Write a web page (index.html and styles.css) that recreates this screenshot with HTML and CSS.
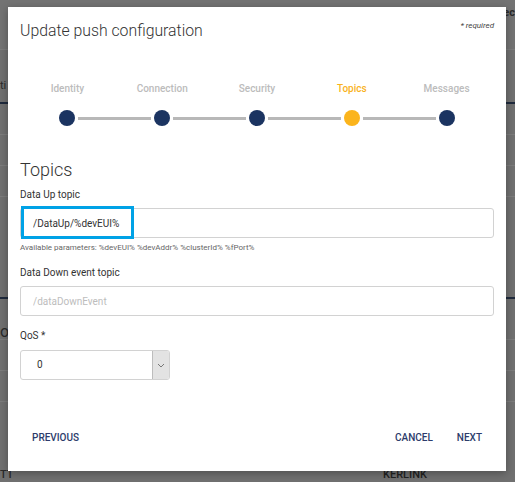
FILE: index.html
```
<!doctype html>
<html>
<head>
    <title>Update push configuration</title>
<link rel="stylesheet" href="styles.css">
</head>
<body>
    <div class="page">
        <div class="band band-top"><span class="peek-right">ec</span></div>
        <div class="band band-tabs"><span class="peek-left">ti</span></div>
        <div class="band band-row"></div>
        <div class="band band-row"></div>
        <div class="band band-row"></div>
        <div class="band band-dark"></div>
        <div class="band band-title"><span class="peek-left big">or</span></div>
        <div class="band band-row"></div>
        <div class="band band-row"></div>
        <div class="band band-last"><span class="peek-left">TT</span><span class="peek-kerlink">KERLINK</span></div>
    </div>

    <div class="modal">
        <div class="modal-header">
            <h1 class="modal-title">Update push configuration</h1>
            <span class="required">* required</span>
        </div>

        <div class="stepper">
            <div class="step done"><span class="step-label">Identity</span><span class="step-dot"></span></div>
            <div class="step done"><span class="step-label">Connection</span><span class="step-dot"></span></div>
            <div class="step done"><span class="step-label">Security</span><span class="step-dot"></span></div>
            <div class="step active"><span class="step-label">Topics</span><span class="step-dot"></span></div>
            <div class="step done"><span class="step-label">Messages</span><span class="step-dot"></span></div>
        </div>

        <h2 class="section-title">Topics</h2>

        <label class="field-label">Data Up topic</label>
        <div class="field">
            <input class="text-input" type="text" value="/DataUp/%devEUI%">
            <span class="highlight"></span>
        </div>
        <p class="help">Available parameters: %devEUI% %devAddr% %clusterId% %fPort%</p>

        <label class="field-label">Data Down event topic</label>
        <div class="field">
            <input class="text-input" type="text" placeholder="/dataDownEvent">
        </div>

        <label class="field-label">QoS *</label>
        <div class="select">
            <span class="select-value">0</span>
            <span class="select-arrow">
                <svg width="8" height="5" viewBox="0 0 8 5"><path d="M1 1 L4 4 L7 1" fill="none" stroke="#777" stroke-width="1"/></svg>
            </span>
        </div>

        <div class="modal-footer">
            <button class="btn">PREVIOUS</button>
            <div class="footer-right">
                <button class="btn">CANCEL</button>
                <button class="btn">NEXT</button>
            </div>
        </div>
    </div>
</body>
</html>
```
FILE: styles.css
```
body {
    margin: 0;
    background-color: #707070;
    font-family: Roboto, "Liberation Sans", sans-serif;
    color: #333;
    overflow: hidden;
}
.page {
    height: 482px;
    display: flex;
    flex-direction: column;
}
.band {
    border-bottom: 1px solid #7c7c7c;
    position: relative;
    flex: none;
}
.band-top { height: 49px; background-color: #737373; }
.band-tabs { height: 52px; border-bottom: 2px solid #1f2a3d; }
.band-row { height: 30px; }
.band-dark { height: 100px; border-bottom: 2px solid #1f2a3d; }
.band-title { height: 40px; }
.band-last { flex: 1; border-bottom: none; }
.peek-left {
    position: absolute;
    left: 0;
    top: 29px;
    font-size: 11px;
    color: #2a2a2a;
}
.peek-left.big { font-size: 16px; top: 23px; }
.band-last .peek-left { top: auto; bottom: 1px; font-weight: 500; }
.peek-right {
    position: absolute;
    right: 0;
    top: 6px;
    font-size: 11px;
    font-weight: bold;
    color: #2a2a2a;
}
.peek-kerlink {
    position: absolute;
    left: 383px;
    bottom: 1px;
    font-size: 11px;
    font-weight: 500;
    color: #222;
}

/* dialog sits over the page */
.modal {
    position: absolute;
    left: 8px;
    top: 7px;
    width: 474px;
    height: 464px;
    padding: 0 12px;
    background-color: #fff;
    box-shadow: 0 2px 8px rgba(0, 0, 0, 0.3);
}
.modal-header {
    display: flex;
    justify-content: space-between;
    align-items: flex-start;
    padding-top: 14px;
}
.modal-title {
    margin: 0;
    font-size: 15.8px;
    line-height: 20px;
    font-weight: 300;
    color: #333;
}
.required {
    font-size: 8px;
    font-style: italic;
    color: #444;
    margin-top: 0;
}

.stepper {
    display: grid;
    grid-template-columns: repeat(5, 1fr);
    margin-top: 42px;
}
.step {
    display: flex;
    flex-direction: column;
    align-items: center;
    position: relative;
}
.step-label {
    font-size: 10px;
    line-height: 12px;
    font-weight: 500;
    color: #bcbcbc;
}
.step-dot {
    width: 16px;
    height: 16px;
    border-radius: 50%;
    background-color: #1b3461;
    margin-top: 15px;
}
.step.active .step-label { color: #f9b21d; }
.step.active .step-dot { background-color: #fbb41c; }
.step:not(:last-child)::after {
    content: "";
    position: absolute;
    left: calc(50% + 11px);
    width: calc(100% - 22px);
    top: 34px;
    height: 3px;
    background-color: #b8b8b8;
}

.section-title {
    margin: 32px 0 0;
    font-size: 18px;
    line-height: 24px;
    font-weight: 300;
    color: #333;
}
.field-label {
    display: block;
    margin-top: 6px;
    font-size: 10px;
    line-height: 14px;
    color: #333;
}
.help + .field-label,
.field + .field-label {
    margin-top: 13px;
}
.field {
    position: relative;
    margin-top: 6px;
}
.text-input {
    display: block;
    box-sizing: border-box;
    width: 100%;
    height: 30px;
    padding: 0 12px;
    border: 1px solid #d2d2d2;
    border-radius: 3px;
    font-family: Roboto, "Liberation Sans", sans-serif;
    font-size: 10px;
    color: #333;
    outline: none;
}
.text-input::placeholder {
    color: #bdbdbd;
}
.highlight {
    position: absolute;
    left: 1px;
    top: -2px;
    width: 107px;
    height: 27px;
    border: 3px solid #00a2e6;
}
.help {
    margin: 5px 0 0;
    font-size: 8px;
    line-height: 10px;
    color: #666;
}
.select {
    display: flex;
    box-sizing: border-box;
    width: 150px;
    height: 30px;
    margin-top: 7px;
    border: 1px solid #d2d2d2;
    border-radius: 3px;
}
.select-value {
    flex: 1;
    padding-left: 16px;
    font-size: 10px;
    line-height: 28px;
}
.select-arrow {
    width: 16px;
    display: flex;
    align-items: center;
    justify-content: center;
    background-color: #e3e3e3;
    border-left: 1px solid #bdbdbd;
    border-radius: 0 2px 2px 0;
}
.modal-footer {
    display: flex;
    justify-content: space-between;
    margin-top: 51px;
}
.footer-right {
    display: flex;
}
.btn {
    border: none;
    background: none;
    padding: 0 12px;
    font-family: Roboto, "Liberation Sans", sans-serif;
    font-size: 10px;
    line-height: 14px;
    font-weight: 500;
    color: #2d3c6b;
    cursor: pointer;
}
```
